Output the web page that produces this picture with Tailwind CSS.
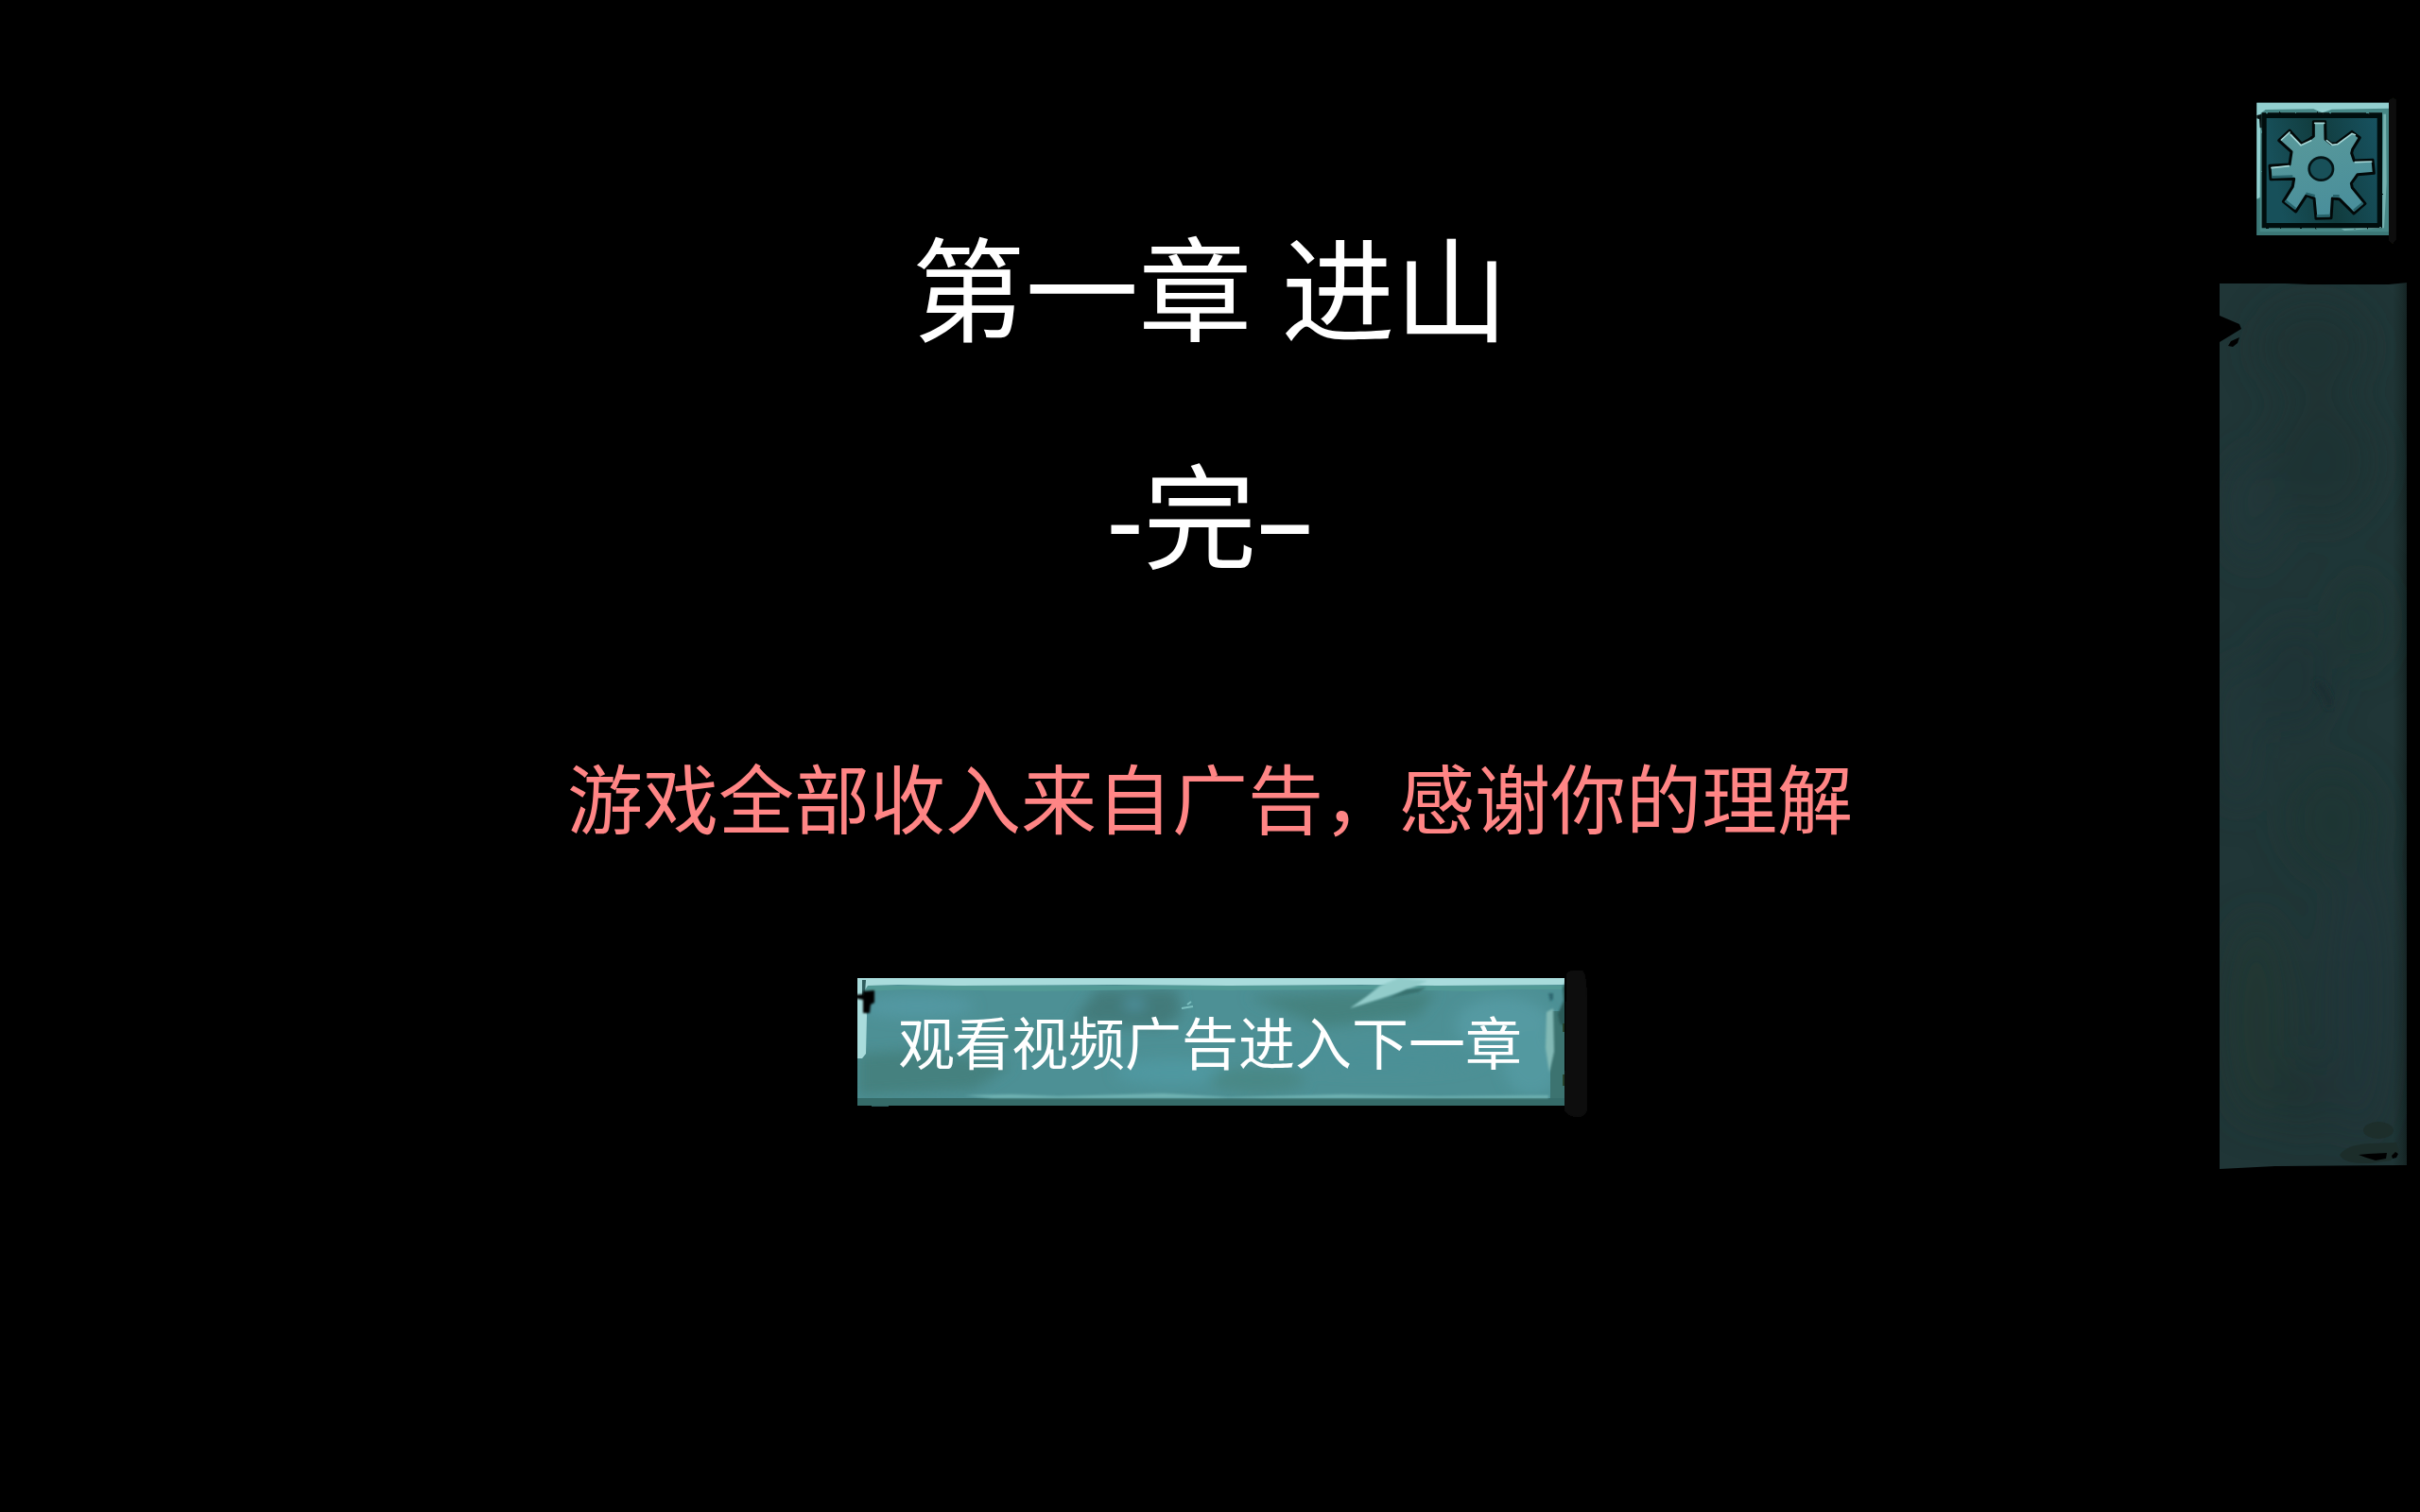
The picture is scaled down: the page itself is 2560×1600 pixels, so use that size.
<!DOCTYPE html>
<html lang="zh-CN">
<head>
<meta charset="utf-8">
<meta name="viewport" content="width=device-width, initial-scale=1">
<title>第一章 进山</title>
<script src="https://cdn.jsdelivr.net/npm/@tailwindcss/browser@4"></script>
</head>
<body class="min-h-screen bg-black text-white font-normal font-['Noto_Sans_CJK_SC',sans-serif]">
<div class="grid grid-cols-[1fr_auto_1fr] min-h-screen">
  <main class="col-start-2 flex flex-col items-center pt-[247px]">
    <h1 class="flex flex-col gap-[120px] text-center text-[120px] leading-[120px] font-normal font-['Noto_Sans','Noto_Sans_CJK_SC',sans-serif]">
      <span>第一章 进山</span>
      <span>-完–</span>
    </h1>
    <p class="mt-[194px] text-[80px] leading-[80px] whitespace-nowrap text-[#ff8585]">游戏全部收入来自广告，感谢你的理解</p>
    <button type="button" class="relative mt-[154px] h-[135px] px-11 pb-1 text-[60px] leading-[60px] font-normal whitespace-nowrap cursor-pointer">
      <svg class="absolute -left-[6px] -top-[10px] w-[784px] h-[160px] max-w-none" viewBox="0 0 784 160" aria-hidden="true">
        <defs>
          <filter id="soft" x="-30%" y="-30%" width="160%" height="160%"><feGaussianBlur stdDeviation="7"/></filter>
          <filter id="edge" x="-30%" y="-30%" width="160%" height="160%"><feGaussianBlur stdDeviation="1"/></filter>
          <clipPath id="plate"><rect x="7" y="10" width="748" height="135"/></clipPath>
        </defs>
        <path d="M757 5q4-4 17-3q5 3 5 36v112q-2 7-10 7q-10 0-14-7z" fill="#111" filter="url(#edge)"/>
        <g clip-path="url(#plate)">
          <rect x="7" y="10" width="748" height="135" fill="#4d9095"/>
          <g filter="url(#soft)">
            <path d="M235 58L260 22H345L350 50L330 62Z" fill="#427a7a"/>
            <path d="M420 30L520 25L620 24L600 50L500 62Z" fill="#45827f"/>
            <path d="M7 90L80 85L170 102L130 128L7 135Z" fill="#44817f"/>
            <ellipse cx="70" cy="40" rx="60" ry="12" fill="#5298a2"/>
            <ellipse cx="200" cy="75" rx="70" ry="12" fill="#488a8a"/>
            <ellipse cx="340" cy="110" rx="60" ry="14" fill="#5098a0"/>
            <ellipse cx="430" cy="118" rx="50" ry="14" fill="#488886"/>
            <ellipse cx="690" cy="60" rx="50" ry="30" fill="#549aa2"/>
            <ellipse cx="560" cy="95" rx="110" ry="14" fill="#4c9096"/>
            <ellipse cx="720" cy="100" rx="30" ry="34" fill="#5399a0"/>
            <ellipse cx="300" cy="38" rx="12" ry="6" fill="#4f93a0"/>
          </g>
          <path d="M740 45H755V145H740Z" fill="#3c7370"/>
          <path d="M7 137H755V145H7Z" fill="#356b69"/>
          <path d="M120 134L170 133L220 135L330 132L400 136L520 133L620 135L738 134V137H150Z" fill="#6fb2b2" filter="url(#edge)"/>
          <path d="M8 18H755V22H700L660 24L560 22L400 23L330 22L190 24L60 22L15 24Z" fill="#529a96"/>
          <path d="M7 10H755V17L620 18L540 17L400 18L280 17L110 18L50 17L18 18L14 24L17 50L16 90L12 95H7Z" fill="#a9dcdc"/>
          <path d="M12 12L16 12L15 26L12 30Z" fill="#2e5d5d"/>
          <path d="M528 42L545 30L560 18L580 10L610 13L590 22L560 32Z" fill="#92ccca" filter="url(#edge)"/>
          <path d="M588 22L609 20L600 25L570 31Z" fill="#39716e" filter="url(#edge)"/>
          <path d="M350 42L362 40M356 38L360 35" stroke="#7cc0c0" stroke-width="2" fill="none"/>
          <path d="M736 46L743 42L744 88L739 110L735 84Z" fill="#82b9b5" filter="url(#edge)"/>
          <path d="M738 26h5v6l-3 3z" fill="#2d6871" filter="url(#edge)"/>
          <path d="M757 14L753 20L754 34L748 48L750 58L757 62Z" fill="#295a58" filter="url(#edge)"/>
        </g>
        <path d="M13 24L25 23L25 36L21 38L20 47L13 47L13 33L3 31V28L13 27Z" fill="#020606" filter="url(#edge)"/>
        <path d="M22 145.500H40" stroke="#2c5b5b" stroke-width="1"/>
        <path d="M754 58v9M754 112v12" stroke="#27432d" stroke-width="2"/>
      </svg>
      <span class="relative">观看视频广告进入下一章</span>
    </button>
  </main>

  <aside class="col-start-3 flex flex-col items-end justify-self-end gap-[39px] pt-[103px] pr-[13px]">
    <button type="button" aria-label="设置" class="mr-[11px] cursor-pointer">
      <svg class="block w-[150px] h-[156px]" viewBox="78 39 450 468" aria-hidden="true">
        <defs>
          <linearGradient id="gear" x1="0" y1="0" x2="0.3" y2="1"><stop offset="0" stop-color="#5b9a9a"/><stop offset="1" stop-color="#4a8f9b"/></linearGradient>
          <linearGradient id="well" x1="0" y1="0.2" x2="1" y2="0"><stop offset="0" stop-color="#17505a"/><stop offset=".45" stop-color="#113c3e"/><stop offset="1" stop-color="#175260"/></linearGradient>
          <filter id="rough" x="-10%" y="-10%" width="120%" height="120%"><feTurbulence type="fractalNoise" baseFrequency="0.05" numOctaves="2" seed="4"/><feDisplacementMap in="SourceGraphic" scale="7"/></filter>
          <filter id="haze" x="-10%" y="-10%" width="120%" height="120%"><feGaussianBlur stdDeviation="2"/></filter>
        </defs>
        <path d="M500 48L515 40L524 46V490L514 505L500 494Z" fill="#0c0d0b" filter="url(#haze)"/>
        <path d="M82 56H501V477H82Z" fill="#478786"/>
        <path d="M82 56H501V74L320 77L290 88L262 76L110 78L94 90L92 356L82 362Z" fill="#92cfcf" filter="url(#haze)"/>
        <path d="M484 92L492 92L494 310L486 454L360 462L350 456L480 450Z" fill="#74b2b0" filter="url(#haze)"/>
        <path d="M82 362H92V466H501V477H82Z" fill="#3b7776"/>
        <path d="M98 88H480V454H98Z" fill="#030808" filter="url(#rough)"/>
        <path d="M82 96L98 92L98 136L92 136L90 108L82 106Z" fill="#061111"/>
        <path d="M113 105H464V438H113Z" fill="url(#well)"/>
        <path d="M262 116L299 116L300 172L318 186L334 186L384 148L409 167L386 204L383 216L391 240L450 238L454 280L402 284L382 312L385 326L426 376L390 408L344 362L322 360L318 422L270 424L264 360L240 350L206 402L166 370L196 322L200 298L126 299L123 256L186 252L192 212L152 176L186 144L224 186L250 172L262 162Z" fill="url(#gear)" stroke="#020808" stroke-width="9" stroke-linejoin="round"/>
        <g fill="none" stroke="#a5d6d6" stroke-width="5" stroke-linecap="round">
          <path d="M266 121H296"/><path d="M160 174L186 150M190 158L222 191L254 176"/><path d="M304 176L322 190L338 188L384 154L394 158"/><path d="M129 263L184 257"/><path d="M394 245L446 243"/>
        </g>
        <g fill="none" stroke="#27636b" stroke-width="8">
          <path d="M272 416L315 414"/><path d="M172 367L205 393"/><path d="M390 398L419 374"/><path d="M130 292L196 290"/><path d="M238 344L266 352M324 352L344 352"/>
        </g>
        <ellipse cx="286" cy="266" rx="38" ry="36" fill="#185059" stroke="#041416" stroke-width="8"/>
      </svg>
    </button>
    <svg class="block w-[200px] h-[940px]" viewBox="0 0 200 940" aria-hidden="true">
      <defs>
        <linearGradient id="fade" x1="0" y1="0" x2="1" y2="0"><stop offset="0" stop-color="#203637"/><stop offset=".92" stop-color="#203637"/><stop offset=".97" stop-color="#1a2c2c"/><stop offset="1" stop-color="#142222"/></linearGradient>
        <filter id="mottle" x="-60%" y="-60%" width="220%" height="220%"><feGaussianBlur stdDeviation="20"/></filter>
        <filter id="fine" x="-30%" y="-30%" width="160%" height="160%"><feGaussianBlur stdDeviation="3"/></filter>
        <clipPath id="panel"><path d="M1 2L70 2L95 3L180 3L199 1V935L60 936L1 939V64L24 50L22 45L1 36Z"/></clipPath>
      </defs>
      <g clip-path="url(#panel)">
        <rect width="200" height="940" fill="url(#fade)"/>
        <g filter="url(#mottle)" opacity="0.6">
          <ellipse cx="100" cy="70" rx="60" ry="50" fill="#1f3132"/>
          <ellipse cx="110" cy="190" rx="60" ry="70" fill="#1f3233"/>
          <ellipse cx="35" cy="240" rx="30" ry="60" fill="#20373a"/>
          <ellipse cx="150" cy="360" rx="26" ry="50" fill="#1f3430"/>
          <ellipse cx="80" cy="420" rx="40" ry="60" fill="#1f3335"/>
          <ellipse cx="20" cy="480" rx="24" ry="80" fill="#20383a"/>
          <ellipse cx="120" cy="570" rx="50" ry="60" fill="#1f3432"/>
          <ellipse cx="150" cy="760" rx="30" ry="150" fill="#20353b"/>
          <ellipse cx="40" cy="780" rx="36" ry="110" fill="#203733"/>
          <ellipse cx="90" cy="860" rx="30" ry="40" fill="#1f3332"/>
        </g>
        <path d="M102 425Q112 428 118 450" stroke="#1c2f33" stroke-width="8" fill="none" filter="url(#fine)"/>
      </g>
      <ellipse cx="169" cy="898" rx="16" ry="9" fill="#1d2e2b"/>
      <path d="M128 924Q136 913 160 912L188 911L191 920L182 930L160 933Q132 934 128 924Z" fill="#1c2d2a"/>
      <path d="M148 924L158 923L178 922L177 928L166 930L156 927Z" fill="#000"/>
      <path d="M183 925L187 921L190 923L188 927L184 928Z" fill="#000"/>
      <path d="M10 68L13 63L22 59L20 65L15 69Z" fill="#000"/>
    </svg>
  </aside>
</div>
</body>
</html>
